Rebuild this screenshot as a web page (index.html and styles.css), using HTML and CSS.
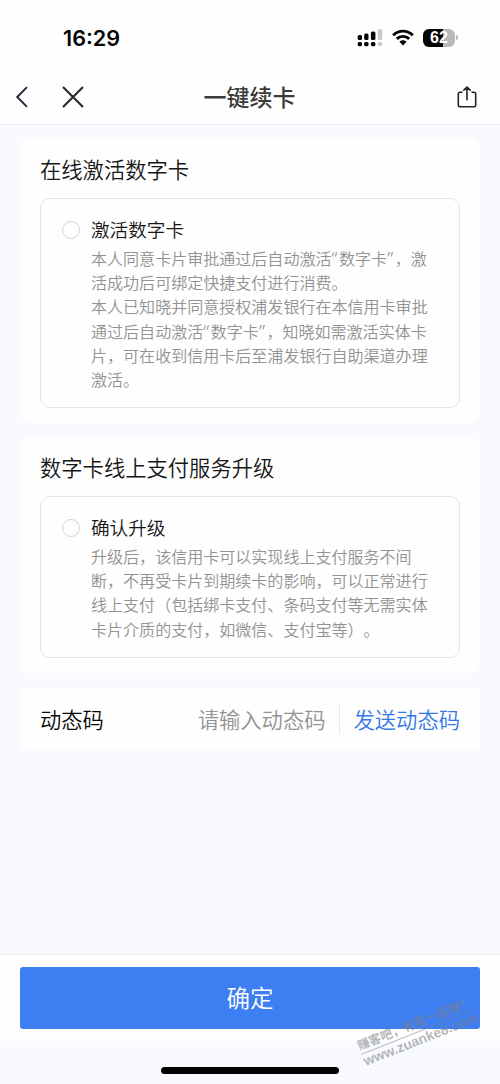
FILE: index.html
```html
<!DOCTYPE html>
<html lang="zh-CN">
<head>
<meta charset="utf-8">
<title>一键续卡</title>
<link rel="stylesheet" href="styles.css">
</head>
<body>
<div class="screen">
  <header class="top">
    <div class="status">
      <span class="clock">16:29</span>
      <div class="indicators">
        <svg class="signal" width="26" height="18" viewBox="0 0 26 18">
          <g fill="#050505">
            <rect x="0.7" y="6" width="4.3" height="5" rx="1.5"/>
            <rect x="7.2" y="4.6" width="4.3" height="6.4" rx="1.5"/>
            <rect x="13.9" y="2.6" width="4.5" height="8.4" rx="1.5"/>
            <rect x="0.7" y="13" width="4.3" height="4.3" rx="1.5"/>
            <rect x="7.2" y="13" width="4.3" height="4.3" rx="1.5"/>
            <rect x="13.9" y="13" width="4.5" height="4.3" rx="1.5"/>
          </g>
          <g fill="#cacaca">
            <rect x="20.8" y="0.3" width="4.4" height="10.7" rx="1.5"/>
            <rect x="20.8" y="13" width="4.4" height="4.3" rx="1.8"/>
          </g>
        </svg>
        <svg class="wifi" width="22" height="17" viewBox="0 0 22 17">
          <g fill="none" stroke="#050505" stroke-width="2.9">
            <path d="M1.2 6.2C6.7.7 15.3.7 20.8 6.2"/>
            <path d="M4.8 9.9c3.5-3.4 8.9-3.4 12.4 0"/>
          </g>
          <path d="M7.4 12.7c2-2 5.2-2 7.2 0L11 16.4z" fill="#050505"/>
        </svg>
        <div class="battery"><span class="battery-body">62</span><span class="battery-tip"></span></div>
      </div>
    </div>
    <nav class="nav">
      <div class="nav-left">
        <svg width="14" height="22" viewBox="0 0 14 22" fill="none" stroke="#202936" stroke-width="1.9"><path d="M12 1.2 2.2 11 12 20.8"/></svg>
        <svg width="22" height="22" viewBox="0 0 22 22" fill="none" stroke="#292929" stroke-width="2.1"><path d="M1 1l20 20M21 1 1 21"/></svg>
      </div>
      <h1 class="title">一键续卡</h1>
      <svg class="share" width="20" height="22" viewBox="0 0 20 22" fill="none" stroke="#242424" stroke-width="1.6" stroke-linejoin="round"><path d="M5.5 6.3H3Q1.3 6.3 1.3 8v11q0 1.7 1.7 1.7h14q1.7 0 1.7-1.7V8q0-1.7-1.7-1.7h-2.5M10 14.2V1.4M6.3 4.6 10 1.2l3.7 3.4"/></svg>
    </nav>
  </header>

  <main class="content">
    <section class="card">
      <h2 class="card-title">在线激活数字卡</h2>
      <div class="option option-activate">
        <span class="radio"></span>
        <div class="option-text">
          <h3 class="option-title">激活数字卡</h3>
          <p class="desc">本人同意卡片审批通过后自动激活<span class="q">“</span>数字卡<span class="q">”</span>，激<br>活成功后可绑定快捷支付进行消费。<br>本人已知晓并同意授权浦发银行在本信用卡审批<br>通过后自动激活<span class="q">“</span>数字卡<span class="q">”</span>，知晓如需激活实体卡<br>片，可在收到信用卡后至浦发银行自助渠道办理<br>激活。</p>
        </div>
      </div>
    </section>

    <section class="card">
      <h2 class="card-title">数字卡线上支付服务升级</h2>
      <div class="option option-upgrade">
        <span class="radio"></span>
        <div class="option-text">
          <h3 class="option-title">确认升级</h3>
          <p class="desc">升级后，该信用卡可以实现线上支付服务不间<br>断，不再受卡片到期续卡的影响，可以正常进行<br>线上支付（包括绑卡支付、条码支付等无需实体<br>卡片介质的支付，如微信、支付宝等）。</p>
        </div>
      </div>
    </section>

    <section class="code-row">
      <span class="code-label">动态码</span>
      <span class="code-input">请输入动态码</span>
      <span class="code-send">发送动态码</span>
    </section>
  </main>

  <footer class="bottom"><div class="confirm">确定</div></footer>
  <div class="home"><span class="home-bar"></span></div>

  <div class="watermark">
    <div class="wm-text">赚客吧，有奖一起赚！</div>
    <div class="wm-url">www.zuanke8.com</div>
  </div>
</div>
</body>
</html>
```
FILE: styles.css
```css
* { box-sizing: border-box; }
body {
  margin: 0;
  font-family: "Noto Sans CJK SC", sans-serif;
  color: #161616;
  text-spacing-trim: space-all;
}
h1, h2, h3, p { margin: 0; font-weight: 350; }
svg { display: block; flex: none; }

.screen {
  position: relative;
  width: 500px;
  height: 1084px;
  overflow: hidden;
  display: flex;
  flex-direction: column;
  background: #f8faff;
  white-space: nowrap;
}

.top { height: 125px; flex: none; background: #fefefe; border-bottom: 1px solid #e9ebef; }
.status {
  height: 70px;
  padding: 5px 42px 0 63px;
  display: flex;
  align-items: center;
  justify-content: space-between;
}
.clock { font: 600 21.6px/24px Inter, sans-serif; color: #050505; }
.indicators { display: flex; align-items: center; }
.wifi { margin-left: 9px; }
.battery { display: flex; align-items: center; margin-left: 9px; }
.battery-body {
  width: 32px;
  height: 18px;
  border-radius: 6px;
  background: linear-gradient(90deg, #050505 64%, #b9b9b9 64%);
  color: #fff;
  font: 700 16px/18px "Liberation Sans", sans-serif;
  text-align: center;
}
.battery-tip { width: 2px; height: 5px; margin-left: 1px; border-radius: 0 2px 2px 0; background: #b9b9b9; }

.nav {
  height: 54px;
  padding: 0 23.5px 0 15px;
  display: grid;
  grid-template-columns: 188.5px auto 1fr;
  align-items: center;
}
.nav-left { display: flex; gap: 33px; }
.title { font-size: 23px; line-height: 34px; font-weight: 500; color: #3a3a3a; padding-bottom: 3px; }
.share { justify-self: end; }

.content { flex: 1; padding: 13px 20px 0; }
.card {
  background: #fefefe;
  border-radius: 10px;
  padding: 14px 20px 15px;
  margin-bottom: 14px;
}
.card-title { font-size: 21.3px; line-height: 34px; margin-bottom: 12px; }
.option {
  display: flex;
  border: 1.5px solid #e4e4e4;
  border-radius: 10px;
  padding: 15px 0 0 21px;
}
.option-activate { height: 210px; }
.option-upgrade { height: 162px; }
.card + .card { padding: 13px 20px 15px; margin-bottom: 15px; }
.radio {
  flex: none;
  width: 18px;
  height: 18px;
  margin: 7px 11px 0 0;
  border: 1px solid #d3d3d3;
  border-radius: 50%;
}
.option-title { font-size: 18.6px; line-height: 30px; }
.desc { font-size: 16.05px; line-height: 24.2px; color: #929292; margin-top: 2px; }
.q { font-family: "Noto Sans", sans-serif; font-size: 19px; line-height: 0; letter-spacing: 1.6px; }

.code-row {
  height: 62px;
  padding: 0 20px 2px;
  display: flex;
  align-items: center;
  background: #fefefe;
  font-size: 21.3px;
}
.code-label { color: #080808; font-weight: 350; }
.code-input { margin-left: auto; font-weight: 350; color: #929292; }
.code-send { margin-left: 13px; padding-left: 14px; border-left: 1px solid #e9e9e9; font-weight: 350; color: #3478e5; }

.bottom { height: 87px; flex: none; padding: 12px 20px 0; background: #fefefe; border-top: 1px solid #eceef2; }
.confirm {
  height: 62px;
  border-radius: 3px;
  background: #3d7ef2;
  color: #fff;
  font-size: 23.5px;
  line-height: 61px;
  font-weight: 350;
  text-align: center;
}
.home { height: 43px; flex: none; display: flex; justify-content: center; padding-top: 26px; }
.home-bar { width: 178px; height: 7px; border-radius: 4px; background: #020202; }

.watermark {
  position: absolute;
  left: 361px;
  top: 1037px;
  width: 119px;
  transform-origin: 0 50%;
  transform: rotate(-21.7deg);
  color: rgba(128, 128, 132, .58);
}
.wm-text { font-size: 12.2px; line-height: 17px; font-weight: 700; border-bottom: 1px solid rgba(128, 128, 132, .5); }
.wm-url { font: 700 13.8px/16px "Liberation Sans", sans-serif; }
```
